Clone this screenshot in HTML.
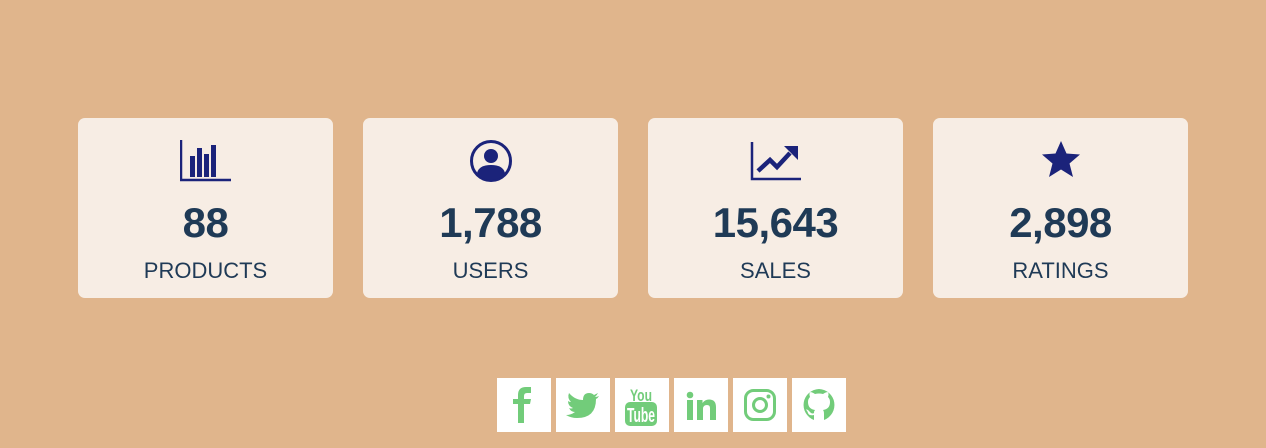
<!DOCTYPE html>
<html><head><meta charset="utf-8"><style>
*{margin:0;padding:0;box-sizing:border-box}
body{width:1266px;height:448px;background:#e0b58c;font-family:"Liberation Sans",sans-serif;position:relative;overflow:hidden}
.card{position:absolute;top:118px;width:255px;height:180px;background:#f7ede4;border-radius:7px;text-align:center;color:#1f3a56}
.card svg{position:absolute;left:102px;top:22px}
.num{position:absolute;top:81px;width:100%;font-size:42px;font-weight:bold;letter-spacing:-0.5px}
.lbl{position:absolute;top:140px;width:100%;font-size:22px}
.s{position:absolute;top:378px;width:54px;height:54px;background:#fff}
.s svg{position:absolute;left:9px;top:9px}
</style></head><body>
<div class="card" style="left:78px"><svg width="52" height="42" viewBox="0 0 52 42"><path d="M1 0V40H51" stroke="#1b237a" stroke-width="2.5" fill="none"/><rect x="10" y="16" width="5" height="21" fill="#1b237a"/><rect x="17" y="8" width="5" height="29" fill="#1b237a"/><rect x="24" y="14" width="5" height="23" fill="#1b237a"/><rect x="31" y="5" width="5" height="32" fill="#1b237a"/></svg><div class="num">88</div><div class="lbl">PRODUCTS</div></div>
<div class="card" style="left:363px"><svg width="52" height="46" viewBox="0 0 52 46"><circle cx="26" cy="21" r="19.5" fill="none" stroke="#1b237a" stroke-width="3"/><circle cx="26" cy="16" r="7" fill="#1b237a"/><path d="M12 33Q14 25 26 25Q38 25 40 33Q34 40 26 40Q18 40 12 33Z" fill="#1b237a"/></svg><div class="num">1,788</div><div class="lbl">USERS</div></div>
<div class="card" style="left:648px"><svg width="52" height="42" viewBox="0 0 52 42"><path d="M2 2V39H51" stroke="#1b237a" stroke-width="2.5" fill="none"/><path d="M8 31L20 20L27 27L40 13" stroke="#1b237a" stroke-width="4.5" fill="none"/><path d="M34 6H48V20Z" fill="#1b237a"/></svg><div class="num">15,643</div><div class="lbl">SALES</div></div>
<div class="card" style="left:933px"><svg width="52" height="42" viewBox="0 0 52 42"><path d="M26 1L31.5 13.5L45 14.5L34.5 23.5L38 37L26 29.5L14 37L17.5 23.5L7 14.5L20.5 13.5Z" fill="#1b237a"/></svg><div class="num">2,898</div><div class="lbl">RATINGS</div></div>

<div class="s" style="left:497px"><svg width="36" height="36" viewBox="0 0 36 36"><path d="M12 36V17H7V12H12V8Q12 0 20 0H25V6H21Q18 6 18 9V12H25L24 17H18V36Z" fill="#72cc7a"/></svg></div>
<div class="s" style="left:556px"><svg width="36" height="36" viewBox="0 0 36 36"><path d="M34 9Q32 10 30 10Q32 8 33 6Q31 7 29 8Q27 6 24 6Q18 6 18 13Q10 13 4 6Q2 11 6 15Q4 15 3 14Q3 19 8 21Q6 22 4 21Q6 25 10 25Q6 28 1 28Q6 31 12 31Q31 31 31 12Q33 11 34 9Z" fill="#72cc7a"/></svg></div>
<div class="s" style="left:615px"><svg width="40" height="40" viewBox="0 0 40 40" style="left:8px;top:8px"><text x="18" y="15" text-anchor="middle" font-family="Liberation Sans" font-weight="bold" font-size="17" fill="#72cc7a" textLength="22" lengthAdjust="spacingAndGlyphs">You</text><rect x="2" y="16" width="32" height="24" rx="5" fill="#72cc7a"/><text x="18" y="36" text-anchor="middle" font-family="Liberation Sans" font-weight="bold" font-size="20" fill="#fff" textLength="28" lengthAdjust="spacingAndGlyphs">Tube</text></svg></div>
<div class="s" style="left:674px"><svg width="36" height="36" viewBox="0 0 36 36"><circle cx="7" cy="8" r="3.3" fill="#72cc7a"/><rect x="4" y="13" width="6" height="20" fill="#72cc7a"/><path d="M14 13H19.5V16Q22 12.5 26 12.5Q33 12.5 33 20V33H27V21Q27 18 24 18Q20 18 20 22V33H14Z" fill="#72cc7a"/></svg></div>
<div class="s" style="left:733px"><svg width="36" height="36" viewBox="0 0 36 36"><rect x="3.5" y="3.5" width="29" height="29" rx="8" fill="none" stroke="#72cc7a" stroke-width="3"/><circle cx="18" cy="18" r="6.5" fill="none" stroke="#72cc7a" stroke-width="3"/><circle cx="26.5" cy="9.5" r="2" fill="#72cc7a"/></svg></div>
<div class="s" style="left:792px"><svg width="36" height="36" viewBox="0 0 36 36"><path d="M18 2A16 16 0 0 0 13 33V28Q8 29 7 26Q6 23 5 23Q5 22 7 23Q9 25 10 26Q12 27 13 26Q13 24 14 23Q7 22 7 15Q7 12 9 10Q8 7 9 5Q11 5 14 7Q18 6 22 7Q25 5 27 5Q28 7 27 10Q29 12 29 15Q29 22 22 23Q23 24 23 27V33A16 16 0 0 0 18 2Z" fill="#72cc7a"/></svg></div>
</body></html>
